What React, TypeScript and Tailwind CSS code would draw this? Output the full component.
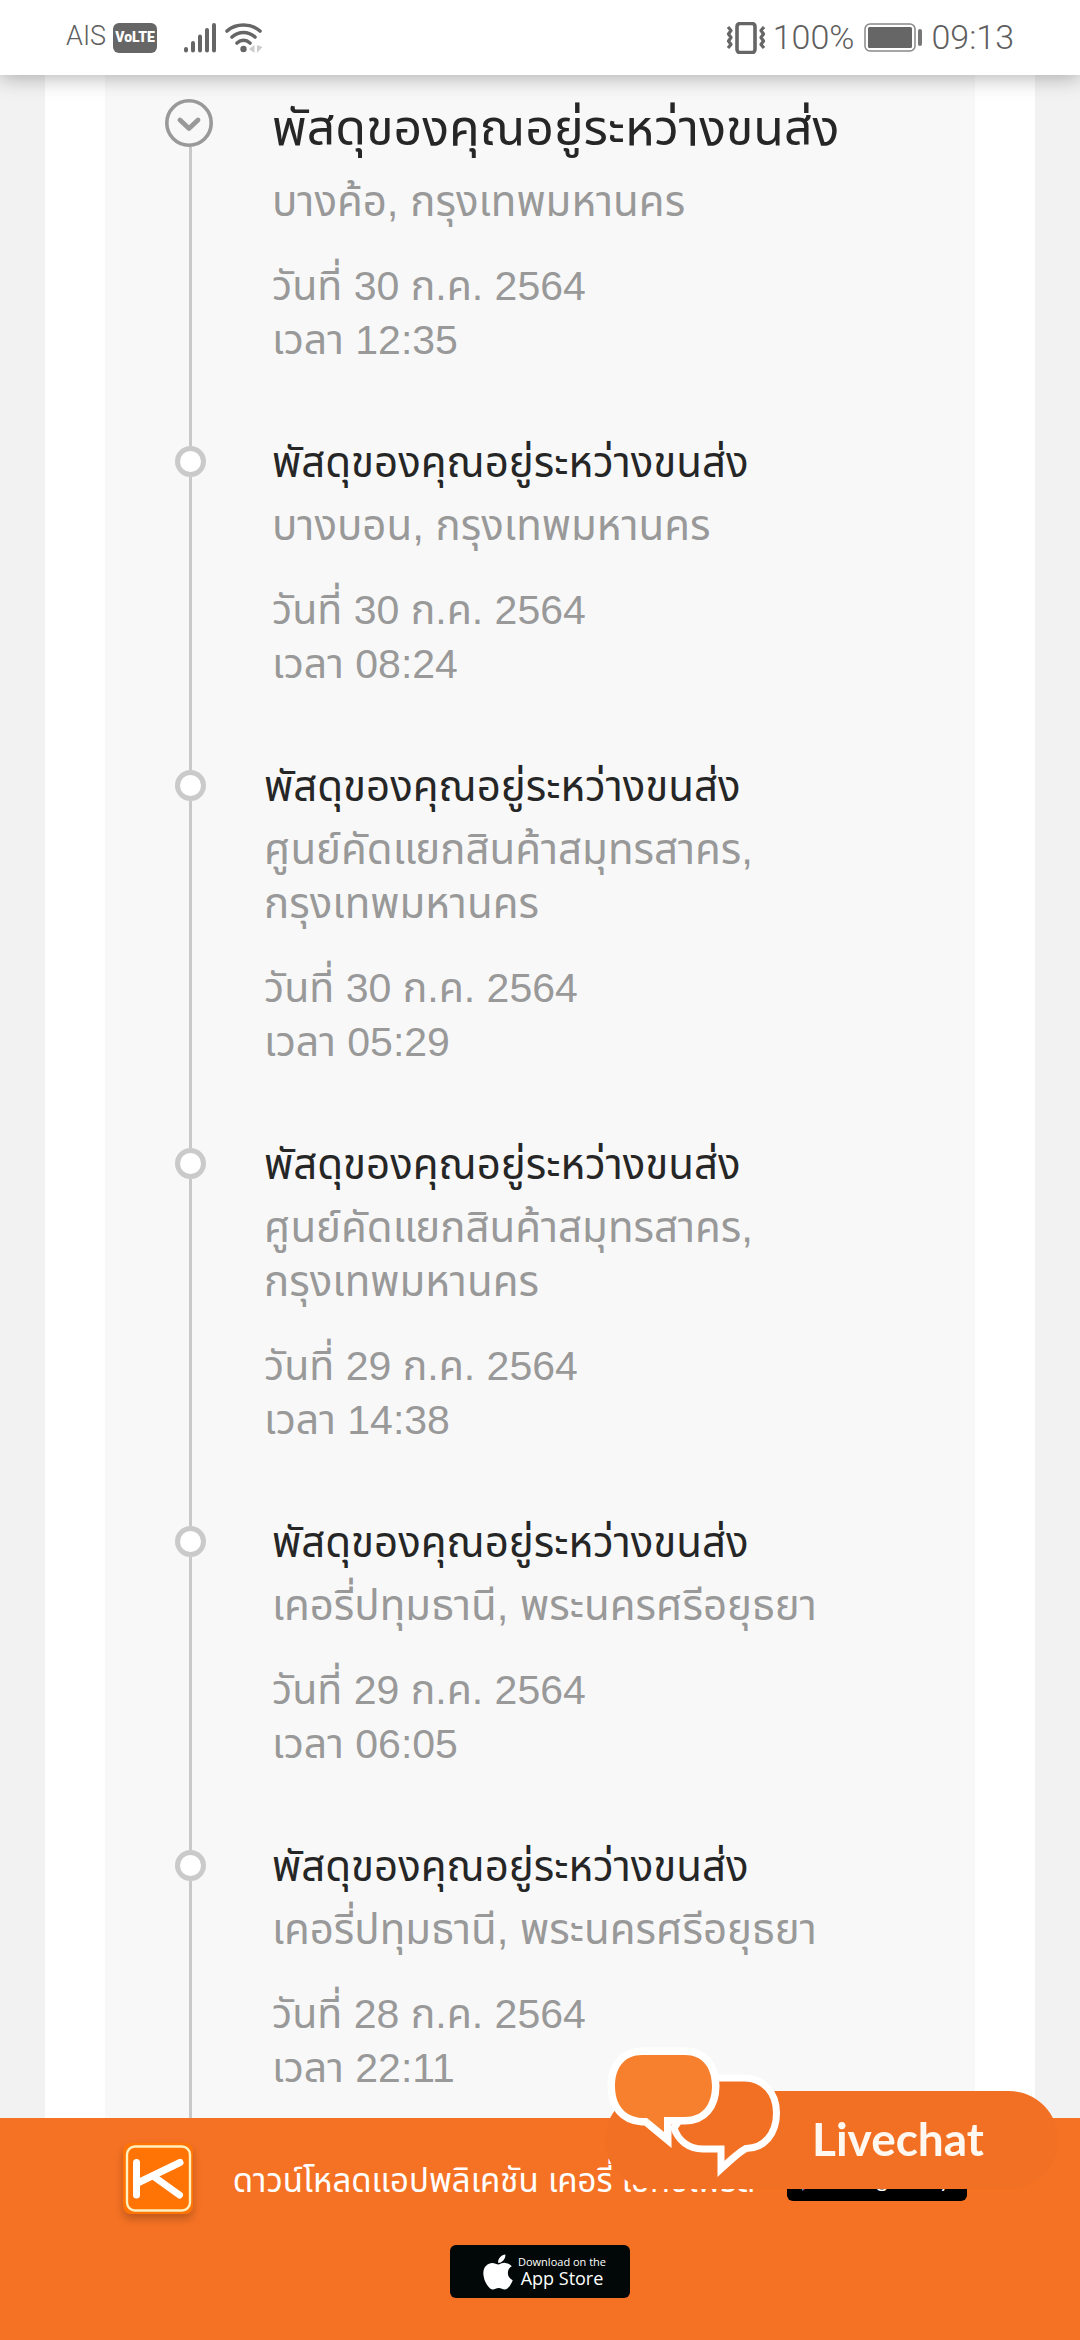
import React from 'react'
import { FaApple } from 'react-icons/fa'

interface TrackingEvent {
  location: string
  date: string
  time: string
  wide?: boolean
}

const STATUS_TEXT = 'พัสดุของคุณอยู่ระหว่างขนส่ง'

const events: TrackingEvent[] = [
  { location: 'บางค้อ, กรุงเทพมหานคร', date: '30 ก.ค. 2564', time: '12:35' },
  { location: 'บางบอน, กรุงเทพมหานคร', date: '30 ก.ค. 2564', time: '08:24' },
  { location: 'ศูนย์คัดแยกสินค้าสมุทรสาคร, กรุงเทพมหานคร', date: '30 ก.ค. 2564', time: '05:29', wide: true },
  { location: 'ศูนย์คัดแยกสินค้าสมุทรสาคร, กรุงเทพมหานคร', date: '29 ก.ค. 2564', time: '14:38', wide: true },
  { location: 'เคอรี่ปทุมธานี, พระนครศรีอยุธยา', date: '29 ก.ค. 2564', time: '06:05' },
  { location: 'เคอรี่ปทุมธานี, พระนครศรีอยุธยา', date: '28 ก.ค. 2564', time: '22:11' },
]

function StatusBar(): React.JSX.Element {
  return (
    <header className="relative z-10 flex h-[75px] shrink-0 items-center justify-between bg-white px-[66px] font-['Roboto',sans-serif] font-light text-[#5f5f5f] shadow-[0_2px_20px_rgba(0,0,0,0.32)]">
      <div className="flex items-center">
        <span className="pb-1 text-[27px] leading-8">AIS</span>
        <span className="ml-[7px] flex h-[30px] w-11 items-center justify-center rounded-md bg-[#666] text-[14px] font-black text-white">
          VoLTE
        </span>
        <svg className="ml-[26px] h-[31px] w-[34px]" viewBox="0 0 34 31" stroke="#666" strokeWidth="4" strokeLinecap="round">
          <path d="M3 27V28.5M10 21V28.5M17 14.500V28.5M24 8V28.5M31 3V28.5" />
        </svg>
        <svg className="ml-2 h-[31px] w-[38px]" viewBox="0 0 38 31" fill="none" stroke="#666" strokeWidth="3.6" strokeLinecap="round">
          <path d="M2 9C11 1 26 1 35 9M7 15C14 9 23 9 30 15M12 21C16 17.500 21 17.500 25 21" />
          <circle cx="18.500" cy="27" r="3.200" fill="#666" stroke="none" />
          <path d="M29.500 23V31L24 27ZM32 23V31L37.500 25Z" fill="#ccc" stroke="none" />
        </svg>
      </div>
      <div className="flex items-center text-[34px]">
        <svg className="mr-[7px] h-8 w-10" viewBox="0 0 40 32" fill="none" stroke="#666">
          <rect x="11" y="1.500" width="18" height="29" rx="3" strokeWidth="3.600" />
          <path d="M2 5L5 8.500L2.500 12L5 15.500L2.500 19L5 22.500L2 26M38 5L35 8.500L37.500 12L35 15.500L37.500 19L35 22.500L38 26" strokeWidth="3.200" strokeLinejoin="round" />
        </svg>
        <span>100%</span>
        <svg className="ml-[10px] mr-[9px] h-[29px] w-[58px]" viewBox="0 0 58 29">
          <rect x="1" y="1" width="50" height="27" rx="5" fill="none" stroke="#888" strokeWidth="1.500" />
          <rect x="4" y="4" width="44" height="21" rx="1.500" fill="#666" />
          <rect x="54" y="6" width="4" height="17" rx="2" fill="#777" />
        </svg>
        <span>09:13</span>
      </div>
    </header>
  )
}

function EventRow({ event, latest }: { event: TrackingEvent; latest: boolean }): React.JSX.Element {
  return (
    <li className="flex pl-[60px]">
      <div className="flex w-[51px] shrink-0 flex-col items-center">
        {latest ? (
          <svg className="mt-6 size-12 shrink-0 self-start" viewBox="0 0 48 48" fill="none" stroke="#999">
            <circle cx="24" cy="24" r="22.200" strokeWidth="3.600" />
            <path d="M15 21L24 29.500L33 21" strokeWidth="4.800" strokeLinecap="round" strokeLinejoin="round" />
          </svg>
        ) : (
          <>
            <div className="h-[21px] w-[3px] bg-[#c9c9c9]" />
            <div className="size-[31px] shrink-0 rounded-full border-5 border-[#cacaca] bg-white" />
          </>
        )}
        <div className="w-[3px] flex-1 bg-[#c9c9c9]" />
      </div>
      <div className={event.wide ? 'ml-12 pt-0.5 pb-[58px]' : 'ml-14 pt-0.5 pb-[58px]'}>
        {latest ? (
          <h2 className="pt-1 text-[50px] leading-[94px] text-[#262626]">{STATUS_TEXT}</h2>
        ) : (
          <h2 className="text-[42px] leading-[72px] text-[#262626]">{STATUS_TEXT}</h2>
        )}
        <p className="max-w-[600px] text-[42px] leading-[54px] break-keep">{event.location}</p>
        <p className="mt-[30px]">วันที่ {event.date}</p>
        <p>เวลา {event.time}</p>
      </div>
    </li>
  )
}

function KLogo(): React.JSX.Element {
  return (
    <svg className="h-[71px] w-[70px] rounded-lg shadow-[0_5px_8px_rgba(0,0,0,0.22)]" viewBox="0 0 70 71" fill="none" stroke="#fff" strokeLinecap="round">
      <rect width="70" height="71" rx="8" fill="#ff7404" stroke="none" />
      <rect x="4" y="3.500" width="63" height="64" rx="8" stroke="#fff0c0" strokeWidth="2.400" />
      <path d="M13.500 19.500V52M13.500 40.500L57 19.500M30 33L56.500 52" strokeWidth="7" />
    </svg>
  )
}

function GooglePlayBadge(): React.JSX.Element {
  return (
    <a
      href="#google-play"
      className="mb-2 flex h-[53px] w-[180px] items-end gap-2 rounded-md bg-black pb-[10px] pl-[14px] font-['Lato',sans-serif] text-white"
    >
      <svg className="h-8 w-[26px]" viewBox="0 0 26 32">
        <path d="M1 0V32L14 16Z" fill="#00c3ff" />
        <path d="M1 0L14 16L19 11Z" fill="#00e676" />
        <path d="M1 32L14 16L19 21Z" fill="#e8407a" />
        <path d="M19 11L26 16L19 21L14 16Z" fill="#ffd000" />
      </svg>
      <span className="text-[22px] leading-6 whitespace-nowrap">Google Play</span>
    </a>
  )
}

function AppStoreBadge(): React.JSX.Element {
  return (
    <a
      href="#app-store"
      className="mt-[31px] flex h-[53px] w-[180px] items-center rounded-md bg-[#020707] pl-7 font-['Open_Sans',sans-serif] text-white"
    >
      <FaApple className="size-10" />
      <span className="flex flex-col items-center">
        <span className="text-[11px] leading-3">Download on the</span>
        <span className="text-[18px] leading-5">App Store</span>
      </span>
    </a>
  )
}

function LivechatButton(): React.JSX.Element {
  return (
    <button type="button" className="fixed right-[21px] bottom-[150px] h-[146px] w-[454px] cursor-pointer">
      <svg className="absolute inset-0 size-full" viewBox="0 0 454 146">
        <rect x="0" y="47" width="453" height="98" rx="49" fill="#f27023" />
        <path
          d="M104 34H139C159 34 171.500 49 171.500 69C171.500 90 159 104.500 141 104.500Q134 108 116 125V105H98C83 105 73 96 69 84Z"
          fill="#f27023"
          stroke="#fff"
          strokeWidth="7"
        />
        <path
          d="M37 11H80C97 11 107 23 107 42C107 61 97 73 80 73H59V88L42 74H37C20 73 10 61 10 42C10 23 20 11 37 11Z"
          fill="#f6802d"
          stroke="#fff"
          strokeWidth="15"
          paintOrder="stroke"
        />
      </svg>
      <span className="absolute top-[70px] left-[207px] font-['Lato',sans-serif] text-[46px] leading-[50px] font-bold text-[#fff8f0]">
        Livechat
      </span>
    </button>
  )
}

export default function App(): React.JSX.Element {
  return (
    <div className="flex h-screen flex-col bg-[#f2f2f2] font-['Liberation_Sans','Noto_Sans_Thai',sans-serif]">
      <StatusBar />

      <main className="mx-[45px] min-h-0 flex-1 overflow-hidden bg-white px-[60px]">
        <ol className="min-h-full bg-[#f8f8f8] text-[41px] leading-[54px] text-[#999]">
          {events.map((event, index) => (
            <EventRow key={event.date + event.time} event={event} latest={index === 0} />
          ))}
        </ol>
      </main>

      <footer className="flex h-[222px] shrink-0 flex-col items-center bg-[#f57224] pt-[25px]">
        <div className="flex items-center pl-[10px]">
          <KLogo />
          <span className="mr-8 ml-10 pt-1 text-[33px] whitespace-nowrap text-white">
            ดาวน์โหลดแอปพลิเคชัน เคอรี่ เอ็กซ์เพรส
          </span>
          <GooglePlayBadge />
        </div>
        <AppStoreBadge />
      </footer>

      <LivechatButton />
    </div>
  )
}
